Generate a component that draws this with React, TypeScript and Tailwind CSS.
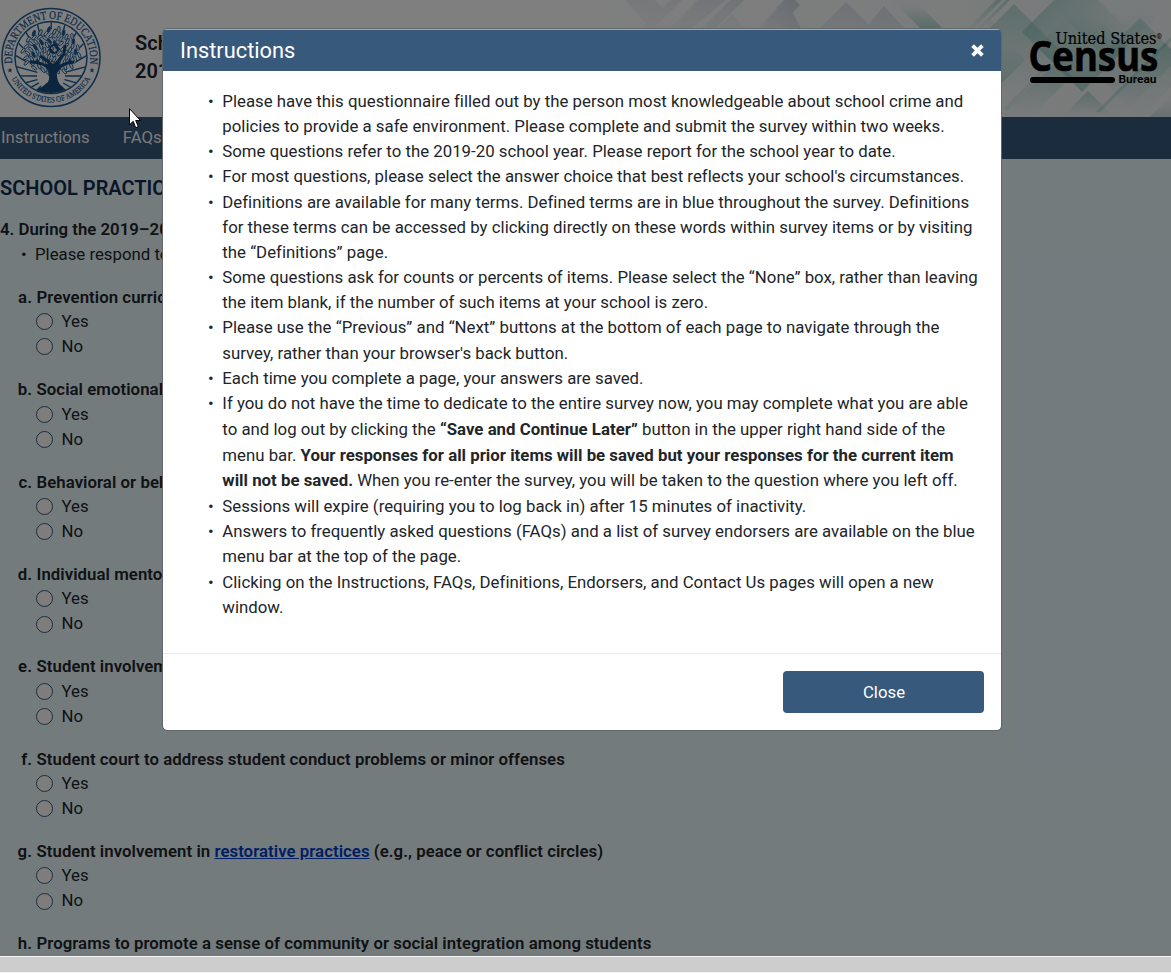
import { ReactNode } from "react";

const items: ReactNode[] = [
  "Please have this questionnaire filled out by the person most knowledgeable about school crime and policies to provide a safe environment. Please complete and submit the survey within two weeks.",
  "Some questions refer to the 2019-20 school year. Please report for the school year to date.",
  "For most questions, please select the answer choice that best reflects your school's circumstances.",
  "Definitions are available for many terms. Defined terms are in blue throughout the survey. Definitions for these terms can be accessed by clicking directly on these words within survey items or by visiting the “Definitions” page.",
  "Some questions ask for counts or percents of items. Please select the “None” box, rather than leaving the item blank, if the number of such items at your school is zero.",
  "Please use the “Previous” and “Next” buttons at the bottom of each page to navigate through the survey, rather than your browser's back button.",
  "Each time you complete a page, your answers are saved.",
  <>
    If you do not have the time to dedicate to the entire survey now, you may complete what you are able to and log out by clicking the <b>“Save and Continue Later”</b> button in the upper right hand side of the menu bar. <b>Your responses for all prior items will be saved but your responses for the current item will not be saved.</b> When you re-enter the survey, you will be taken to the question where you left off.
  </>,
  "Sessions will expire (requiring you to log back in) after 15 minutes of inactivity.",
  "Answers to frequently asked questions (FAQs) and a list of survey endorsers are available on the blue menu bar at the top of the page.",
  "Clicking on the Instructions, FAQs, Definitions, Endorsers, and Contact Us pages will open a new window.",
];

const questions: [string, ReactNode][] = [
  ["a.", "Prevention curriculum"],
  ["b.", "Social emotional learning"],
  ["c.", "Behavioral or behavior"],
  ["d.", "Individual mentoring"],
  ["e.", "Student involvement"],
  ["f.", "Student court to address student conduct problems or minor offenses"],
  [
    "g.",
    <>
      Student involvement in <a className="text-[#003cc8] underline">restorative practices</a> (e.g., peace or conflict circles)
    </>,
  ],
  ["h.", "Programs to promote a sense of community or social integration among students"],
];

const leaves = Array.from({ length: 80 }, (_, i) => {
  const a = i * 2.4;
  const r = 3.3 * Math.sqrt(i);
  return { x: 51 + Math.cos(a) * r, y: 51 + Math.sin(a) * r * 0.78, a: (i * 67) % 110 + 35 };
});

function Seal() {
  return (
    <svg className="w-[102px] h-[110px] shrink-0" viewBox="0 0 102 110" fill="none">
      <defs>
        <path id="arcTop" d="M12.4 63.5 A39 39 0 1 1 89.6 63.5" />
        <path id="arcBottom" d="M11.2 78 A44.7 44.7 0 0 0 90.8 78" />
        <clipPath id="inner">
          <circle cx="51" cy="57.5" r="35.5" />
        </clipPath>
      </defs>
      <circle cx="51" cy="57.5" r="49" stroke="#1c5c96" strokeWidth="1.5" />
      <circle cx="51" cy="57.5" r="36" stroke="#1c5c96" strokeWidth="1.5" />
      <g clipPath="url(#inner)" stroke="#1c5c96">
        {Array.from({ length: 24 }, (_, i) => (
          <line
            key={i}
            x1={51 + Math.cos(i * 0.262) * 14}
            y1={76 + Math.sin(i * 0.262) * 14}
            x2={51 + Math.cos(i * 0.262) * 70}
            y2={76 + Math.sin(i * 0.262) * 70}
            strokeWidth="1.4"
          />
        ))}
        <ellipse cx="51" cy="51" rx="28" ry="22" fill="#e6eff7" stroke="none" />
        {leaves.map((l, i) => (
          <ellipse
            key={i}
            cx={l.x}
            cy={l.y}
            rx="3"
            ry="1.3"
            strokeWidth="0.9"
            fill={i % 5 === 0 ? "#1c5c96" : "#f5f8fa"}
            transform={`rotate(${l.a} ${l.x} ${l.y})`}
          />
        ))}
        <g stroke="#174a7c">
          <path d="M53 88 Q49 72 49 62 L40 56 M51 70 Q44 62 30 62 M56 72 Q60 63 74 62 M54 66 L64 54 L65 45" strokeWidth="3" />
          <circle cx="54" cy="49" r="4" strokeWidth="2" />
        </g>
        <path d="M46 60 Q53 72 48 82 Q43 87 36 90 L66 90 Q58 85 57 77 Q56 69 61 61 Q55 65 53 64Z" fill="#174a7c" stroke="none" />
        <path d="M33 91 Q51 84 69 91 L65 96 H37Z" fill="#174a7c" stroke="none" />
      </g>
      <g fill="#1c5c96" fontFamily="Liberation Serif, serif">
        <text fontSize="11.5" stroke="#1c5c96" strokeWidth=".25">
          <textPath href="#arcTop" textLength="134" lengthAdjust="spacingAndGlyphs">DEPARTMENT OF EDUCATION</textPath>
        </text>
        <text fontSize="8" stroke="#1c5c96" strokeWidth=".2">
          <textPath href="#arcBottom" startOffset="1" textLength="96" lengthAdjust="spacingAndGlyphs">UNITED STATES OF AMERICA</textPath>
        </text>
      </g>
      <g fill="#1c5c96">
        <path id="star" d="M10 67.5L10.7 69.4H12.7L11.1 70.6L11.7 72.6L10 71.4L8.3 72.6L8.9 70.6L7.3 69.4H9.3Z" />
        <use href="#star" x="82" />
      </g>
    </svg>
  );
}

function HeaderPattern() {
  return (
    <svg className="w-[611px] h-[117px] ml-auto" viewBox="560 0 611 117" fill="none">
      <defs>
        <linearGradient id="down" x1="0" y1="0" x2="0" y2="1">
          <stop offset="0.2" stopColor="#4aa898" stopOpacity="0.02" />
          <stop offset="1" stopColor="#4aa898" stopOpacity="0.42" />
        </linearGradient>
        <linearGradient id="up" x1="0" y1="1" x2="0" y2="0">
          <stop offset="0.1" stopColor="#4aa898" stopOpacity="0.02" />
          <stop offset="1" stopColor="#4aa898" stopOpacity="0.36" />
        </linearGradient>
        <linearGradient id="left" x1="1" y1="1" x2="0" y2="0">
          <stop offset="0.3" stopColor="#4aa898" stopOpacity="0.02" />
          <stop offset="0.8" stopColor="#4aa898" stopOpacity="0.34" />
        </linearGradient>
        <linearGradient id="slate" x1="0" y1="1" x2="1" y2="0">
          <stop offset="0" stopColor="#6682a8" stopOpacity="0.04" />
          <stop offset="1" stopColor="#6682a8" stopOpacity="0.3" />
        </linearGradient>
        <linearGradient id="wash" x1="0" y1="0" x2="1" y2="0">
          <stop offset="0" stopColor="#6682a8" stopOpacity="0" />
          <stop offset="1" stopColor="#5c9c98" stopOpacity="0.09" />
        </linearGradient>
      </defs>
      <path d="M560 0H1171V117H560Z" fill="url(#wash)" />
      <path d="M640 30L670 0H682L652 30ZM668 30L698 0H726L690 30ZM700 30L730 0H744L714 30ZM625 0H655L665 10L648 26Z" fill="url(#slate)" opacity=".55" />
      <path d="M756 30L786 0L802 30ZM776 8L784 0H795L800 5L788 17Z" fill="url(#slate)" />
      <path d="M716 30L732 14L746 30ZM818 30L846 2L874 30ZM864 30L884 6L906 30Z" fill="url(#slate)" opacity=".7" />
      <path d="M892 0H915L944 30H922Z" fill="url(#down)" />
      <path d="M964 32L996 0H1002L970 32ZM974 32L1006 0H1010L978 32ZM984 30L990 20L1001 30Z" fill="url(#up)" />
      {/* overlapping diamonds behind the logo */}
      <path d="M1014 4L1062 52L1014 100L966 52Z" fill="url(#up)" opacity=".9" />
      <path d="M1022 32L1076 -22L1130 32L1076 86Z" fill="url(#left)" />
      <path d="M1060 0H1138L1155 18L1110 63L1047 0Z" fill="url(#down)" opacity=".6" />
      <path d="M1082 2L1127 47L1082 92L1037 47Z" fill="url(#down)" />
      <path d="M977 60L1001 36L1025 60L1001 84Z" fill="url(#down)" opacity=".7" />
      <path d="M1001 117L1057 61L1072 76L1031 117Z" fill="url(#up)" />
      <path d="M1004 108L1050 62L1053 65L1007 111Z" fill="#4aa898" opacity=".12" />
      <path d="M1088 91L1114 117H1062Z" fill="url(#up)" />
      <path d="M1140 18L1190 68L1140 118L1090 68Z" fill="url(#up)" opacity=".75" />
      <path d="M1098 110L1165 43L1171 49V66L1120 117H1105Z" fill="url(#up)" opacity=".7" />
      <path d="M1096 112L1171 37V41L1100 112Z" fill="#4aa898" opacity=".22" />
      <path d="M1150 117L1171 96V117Z" fill="url(#down)" opacity=".5" />
      <g fill="#000">
        <text x="1055.5" y="44" fontSize="16" fontFamily="DejaVu Serif, serif" stroke="#000" strokeWidth=".2" textLength="101" lengthAdjust="spacingAndGlyphs">United States</text>
        <text x="1156.5" y="39" fontSize="7" fontFamily="Roboto, sans-serif">®</text>
        <text x="1028.5" y="71" fontSize="42" fontWeight="700" fontFamily="Noto Sans, sans-serif" stroke="#000" strokeWidth=".6" textLength="130" lengthAdjust="spacingAndGlyphs">Census</text>
        <text x="1118.5" y="83" fontSize="11.5" fontWeight="700" fontFamily="Roboto, sans-serif" textLength="38" lengthAdjust="spacingAndGlyphs">Bureau</text>
        <rect x="1030" y="77" width="85" height="6" rx="3" />
      </g>
    </svg>
  );
}

function Radio({ label }: { label: string }) {
  return (
    <div className="flex items-center h-[25.2px] pl-9">
      <span className="w-[17px] h-[17px] rounded-full border border-[#36597c] bg-[#fff8f8]" />
      <span className="ml-[8.5px]">{label}</span>
    </div>
  );
}

function Survey() {
  return (
    <div className="h-[956px] overflow-hidden bg-[#e8f6fb] text-[#212529]">
      <header className="flex h-[117px] bg-white">
        <Seal />
        <div className="pl-[33px] pt-[29px] w-[320px] text-xl leading-7 font-semibold whitespace-nowrap">
          <div>School Survey</div>
          <div>2019–20</div>
        </div>
        <HeaderPattern />
      </header>
      <nav className="flex items-center h-[42px] pl-px gap-[33px] bg-[#36597c] text-[#f4f4f4]">
        <span>Instructions</span>
        <span>FAQs</span>
      </nav>
      <h1 className="pt-[15px] text-xl leading-7 font-semibold text-[#112e51]">SCHOOL PRACTICES</h1>
      <div className="mt-[14.7px] font-semibold">4. During the 2019–20 school</div>
      <div className="flex pl-[21px]">
        <span className="w-[14px]">•</span>
        <span>Please respond to</span>
      </div>
      <div className="pt-[17.8px]">
        {questions.map(([letter, title]) => (
          <div key={letter} className="h-[92.35px]">
            <div className="flex h-[24.3px] font-semibold tracking-[0.05px] whitespace-nowrap">
              <span className="w-8 text-right mr-[4.5px]">{letter}</span>
              <span>{title}</span>
            </div>
            {letter !== "h." && (
              <>
                <Radio label="Yes" />
                <Radio label="No" />
              </>
            )}
          </div>
        ))}
      </div>
    </div>
  );
}

function Modal() {
  return (
    <section className="absolute left-[162px] top-[28px] w-[840px] h-[703px] flex flex-col rounded-[5px] border border-[#61676a] bg-white bg-clip-padding text-[#212529] overflow-hidden">
      <div className="flex items-center justify-between h-[42px] shrink-0 pl-[17px] pr-[17px] bg-[#36597c] text-white border-t border-[#9bacbd]">
        <h2 className="text-[21.8px]">Instructions</h2>
        <svg className="w-[13px] h-[13px]" viewBox="0 0 14 14" stroke="#fff" strokeWidth="4">
          <path d="M1.7 1.7L12.3 12.3M12.3 1.7L1.7 12.3" />
        </svg>
      </div>
      <ul className="grow pt-[17.9px] pl-[45px] pr-[21px] leading-[25.17px] tracking-[0.015px]">
        {items.map((item, i) => (
          <li key={i} className={i === 7 ? "flex leading-[25.8px]" : "flex"}>
            <span className="w-[14.3px] shrink-0">•</span>
            <span>{item}</span>
          </li>
        ))}
      </ul>
      <div className="flex justify-end h-[77px] shrink-0 pt-[17px] pr-[17px] border-t border-[#e9ecef]">
        <button className="w-[201px] h-[42px] pt-px pl-px rounded bg-[#36597c] text-white">Close</button>
      </div>
    </section>
  );
}

export default function App() {
  return (
    <main className="relative h-[973px] overflow-hidden bg-[#cdcdcd] font-['Roboto',sans-serif] text-[16.8px] leading-[25.2px]">
      <Survey />
      <div className="h-[17px] border-y border-[#f4f4f4] bg-[#cdcdcd]" />
      <div className="absolute inset-x-0 top-0 h-[956px] bg-black/50" />
      <Modal />
      <svg className="absolute left-[129px] top-[108px] w-[12px] h-[21px]" viewBox="0 0 12 21">
        <path d="M.5 .7V16.8L4.2 13.3L6.7 19.7L9.3 18.6L6.7 12.5H11.5Z" fill="#fff" stroke="#000" />
      </svg>
    </main>
  );
}
